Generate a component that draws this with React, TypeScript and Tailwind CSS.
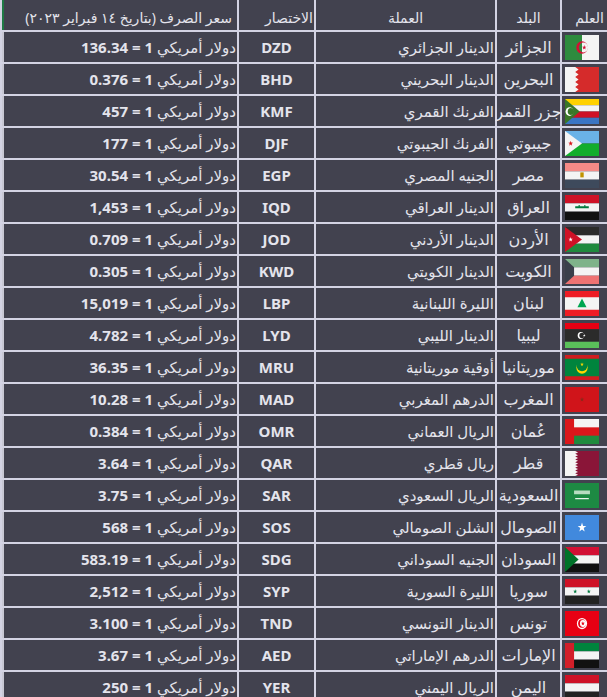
import React from "react";

type Row = {
  code: string;
  country: string;
  currency: string;
  rate: string;
};

const rows: Row[] = [
  { code: "DZD", country: "الجزائر", currency: "الدينار الجزائري", rate: "136.34" },
  { code: "BHD", country: "البحرين", currency: "الدينار البحريني", rate: "0.376" },
  { code: "KMF", country: "جزر القمر", currency: "الفرنك القمري", rate: "457" },
  { code: "DJF", country: "جيبوتي", currency: "الفرنك الجيبوتي", rate: "177" },
  { code: "EGP", country: "مصر", currency: "الجنيه المصري", rate: "30.54" },
  { code: "IQD", country: "العراق", currency: "الدينار العراقي", rate: "1,453" },
  { code: "JOD", country: "الأردن", currency: "الدينار الأردني", rate: "0.709" },
  { code: "KWD", country: "الكويت", currency: "الدينار الكويتي", rate: "0.305" },
  { code: "LBP", country: "لبنان", currency: "الليرة اللبنانية", rate: "15,019" },
  { code: "LYD", country: "ليبيا", currency: "الدينار الليبي", rate: "4.782" },
  { code: "MRU", country: "موريتانيا", currency: "أوقية موريتانية", rate: "36.35" },
  { code: "MAD", country: "المغرب", currency: "الدرهم المغربي", rate: "10.28" },
  { code: "OMR", country: "عُمان", currency: "الريال العماني", rate: "0.384" },
  { code: "QAR", country: "قطر", currency: "ريال قطري", rate: "3.64" },
  { code: "SAR", country: "السعودية", currency: "الريال السعودي", rate: "3.75" },
  { code: "SOS", country: "الصومال", currency: "الشلن الصومالي", rate: "568" },
  { code: "SDG", country: "السودان", currency: "الجنيه السوداني", rate: "583.19" },
  { code: "SYP", country: "سوريا", currency: "الليرة السورية", rate: "2,512" },
  { code: "TND", country: "تونس", currency: "الدينار التونسي", rate: "3.100" },
  { code: "AED", country: "الإمارات", currency: "الدرهم الإماراتي", rate: "3.67" },
  { code: "YER", country: "اليمن", currency: "الريال اليمني", rate: "250" },
];

// five point star as polygon points
const star = (cx: number, cy: number, r: number) => {
  const pts: string[] = [];
  for (let i = 0; i < 10; i++) {
    const rad = i % 2 === 0 ? r : r * 0.4;
    const a = -Math.PI / 2 + (i * Math.PI) / 5;
    pts.push(`${(cx + rad * Math.cos(a)).toFixed(2)},${(cy + rad * Math.sin(a)).toFixed(2)}`);
  }
  return pts.join(" ");
};

const Tri = ({ a, b, c }: { a: string; b: string; c: string }) => (
  <>
    <rect width="30" height="6.67" fill={a} />
    <rect y="6.67" width="30" height="6.67" fill={b} />
    <rect y="13.33" width="30" height="6.67" fill={c} />
  </>
);

const Crescent = ({ id, cx, cy, r, off, color }: { id: string; cx: number; cy: number; r: number; off: number; color: string }) => (
  <>
    <mask id={id}>
      <rect width="30" height="20" fill="white" />
      <circle cx={cx + off} cy={cy} r={r * 0.8} fill="black" />
    </mask>
    <circle cx={cx} cy={cy} r={r} fill={color} mask={`url(#${id})`} />
  </>
);

const flagShapes: Record<string, React.ReactNode> = {
  DZD: (
    <>
      <rect width="15" height="20" fill="#2e8b3e" />
      <rect x="15" width="15" height="20" fill="#f4f4f4" />
      <Crescent id="m-dz" cx={15} cy={10} r={5} off={1.3} color="#d21034" />
      <polygon points={star(17, 10, 2)} fill="#d21034" />
    </>
  ),
  BHD: (
    <>
      <rect width="30" height="20" fill="#f4f4f4" />
      <polygon points="9,0 30,0 30,20 9,20 12,18 9,16 12,14 9,12 12,10 9,8 12,6 9,4 12,2" fill="#d52b2b" />
    </>
  ),
  KMF: (
    <>
      <rect width="30" height="5" fill="#ffd100" />
      <rect y="5" width="30" height="5" fill="#f4f4f4" />
      <rect y="10" width="30" height="5" fill="#ce1126" />
      <rect y="15" width="30" height="5" fill="#3a75c4" />
      <polygon points="0,0 13,10 0,20" fill="#3a7728" />
      <Crescent id="m-km" cx={4} cy={10} r={3.5} off={1.2} color="#fff" />
    </>
  ),
  DJF: (
    <>
      <rect width="30" height="10" fill="#6ab2e7" />
      <rect y="10" width="30" height="10" fill="#12ad2b" />
      <polygon points="0,0 15,10 0,20" fill="#f4f4f4" />
      <polygon points={star(5, 10, 2.2)} fill="#d7141a" />
    </>
  ),
  EGP: (
    <>
      <Tri a="#f58a86" b="#f4f4f4" c="#3e4a5c" />
      <rect x="13.5" y="7.5" width="3" height="4" fill="#c09300" />
    </>
  ),
  IQD: (
    <>
      <Tri a="#ce1126" b="#f4f4f4" c="#111" />
      <rect x="9" y="9" width="12" height="1.6" fill="#007a3d" />
      <rect x="12" y="8" width="1" height="2" fill="#007a3d" />
      <rect x="17" y="8" width="1" height="2" fill="#007a3d" />
    </>
  ),
  JOD: (
    <>
      <Tri a="#2b2b2b" b="#f4f4f4" c="#1f8a3e" />
      <polygon points="0,0 15,10 0,20" fill="#ce1126" />
      <polygon points={star(5, 10, 2)} fill="#fff" />
    </>
  ),
  KWD: (
    <>
      <Tri a="#7fb38a" b="#f4f4f4" c="#ee7373" />
      <polygon points="0,0 8,6.67 8,13.33 0,20" fill="#3a3f4a" />
    </>
  ),
  LBP: (
    <>
      <rect width="30" height="20" fill="#ee1c25" />
      <rect y="5" width="30" height="10" fill="#f4f4f4" />
      <polygon points="15,6 19,13 11,13" fill="#00a651" />
    </>
  ),
  LYD: (
    <>
      <rect width="30" height="5" fill="#e70013" />
      <rect y="5" width="30" height="10" fill="#2b2b2b" />
      <rect y="15" width="30" height="5" fill="#5ac05a" />
      <Crescent id="m-ly" cx={14} cy={10} r={2.8} off={0.9} color="#fff" />
      <polygon points={star(17, 10, 1.2)} fill="#fff" />
    </>
  ),
  MRU: (
    <>
      <rect width="30" height="20" fill="#d01c1f" />
      <rect y="3" width="30" height="14" fill="#00843d" />
      <mask id="m-mr">
        <rect width="30" height="20" fill="white" />
        <circle cx="15" cy="8" r="5" fill="black" />
      </mask>
      <circle cx="15" cy="10" r="5" fill="#ffd700" mask="url(#m-mr)" />
      <polygon points={star(15, 7.5, 1.6)} fill="#ffd700" />
    </>
  ),
  MAD: (
    <>
      <rect width="30" height="20" fill="#d0141a" />
      <polygon points={star(15, 10, 2)} fill="#8a2a1a" />
    </>
  ),
  OMR: (
    <>
      <rect width="30" height="20" fill="#db161b" />
      <rect x="8" width="22" height="6.67" fill="#f4f4f4" />
      <rect x="8" y="13.33" width="22" height="6.67" fill="#1f8a3e" />
    </>
  ),
  QAR: (
    <>
      <rect width="30" height="20" fill="#f4f4f4" />
      <polygon points="9,0 30,0 30,20 9,20 11.5,18.9 9,17.8 11.5,16.7 9,15.6 11.5,14.4 9,13.3 11.5,12.2 9,11.1 11.5,10 9,8.9 11.5,7.8 9,6.7 11.5,5.6 9,4.4 11.5,3.3 9,2.2 11.5,1.1" fill="#8a1538" />
    </>
  ),
  SAR: (
    <>
      <rect width="30" height="20" fill="#1d8a43" />
      <rect x="8" y="6" width="14" height="3" fill="#b8dcc0" />
      <rect x="9" y="12" width="12" height="1" fill="#e8f4ea" />
    </>
  ),
  SOS: (
    <>
      <rect width="30" height="20" fill="#4189dd" />
      <polygon points={star(15, 10, 4)} fill="#fff" />
    </>
  ),
  SDG: (
    <>
      <Tri a="#d21034" b="#f4f4f4" c="#111" />
      <polygon points="0,0 12,10 0,20" fill="#007229" />
    </>
  ),
  SYP: (
    <>
      <Tri a="#ce1126" b="#f4f4f4" c="#222" />
      <polygon points={star(9, 10, 1.8)} fill="#007a3d" />
      <polygon points={star(21, 10, 1.8)} fill="#007a3d" />
    </>
  ),
  TND: (
    <>
      <rect width="30" height="20" fill="#e70013" />
      <circle cx="15" cy="10" r="4.5" fill="#fff" />
      <Crescent id="m-tn" cx={15} cy={10} r={3.4} off={0.9} color="#e70013" />
      <polygon points={star(15.8, 10, 1.8)} fill="#e70013" />
    </>
  ),
  AED: (
    <>
      <Tri a="#00843d" b="#f4f4f4" c="#111" />
      <rect width="8" height="20" fill="#d21f2a" />
    </>
  ),
  YER: (
    <>
      <Tri a="#ce1126" b="#f4f4f4" c="#222" />
    </>
  ),
};

const Flag = ({ code }: { code: string }) => (
  <svg viewBox="0 0 30 20" preserveAspectRatio="none" className="w-[34px] h-[25px] block">
    {flagShapes[code]}
  </svg>
);

const cell = "bg-[#42424f] flex items-center h-[30px]";

export default function App() {
  return (
    <div
      dir="rtl"
      className="w-[607px] h-[697px] overflow-hidden bg-[#42424f] text-[#e4e4ec] text-[15px]"
      style={{ fontFamily: '"Noto Sans", "DejaVu Sans", sans-serif' }}
    >
      <div className="grid grid-cols-[45px_63px_179px_75px_235px] gap-[2px] bg-[#d3d3e3] w-[607px]">
        {/* header */}
        <div className={`${cell} pt-1 pr-[3px] text-[14px]`}>العلم</div>
        <div className={`${cell} pt-1 justify-center text-[14px]`}>البلد</div>
        <div className={`${cell} pt-1 justify-center text-[14px]`}>العملة</div>
        <div className={`${cell} pt-1 pr-[1px] text-[14px]`}>الاختصار</div>
        <div className={`${cell} pt-1 pr-[5px] text-[14px] border-l-2 border-l-[#1e7a45]`}>
          سعر الصرف (بتاريخ ١٤ فبراير ٢٠٢٣)
        </div>

        {rows.map((r) => (
          <React.Fragment key={r.code}>
            <div className={`${cell} justify-center pr-[5px]`}>
              <Flag code={r.code} />
            </div>
            <div className={`${cell} justify-center font-medium text-[16px] whitespace-nowrap`}>
              {r.country}
            </div>
            <div className={`${cell} pr-[1px] whitespace-nowrap`}>{r.currency}</div>
            <div className={`${cell} justify-center font-bold`}>{r.code}</div>
            <div className={`${cell} pr-[1px] whitespace-nowrap border-l-2 border-l-[#c8c8d4]`}>
              <span>
                دولار أمريكي&nbsp;<span className="font-bold">1 = {r.rate}</span>
              </span>
            </div>
          </React.Fragment>
        ))}
      </div>
    </div>
  );
}
